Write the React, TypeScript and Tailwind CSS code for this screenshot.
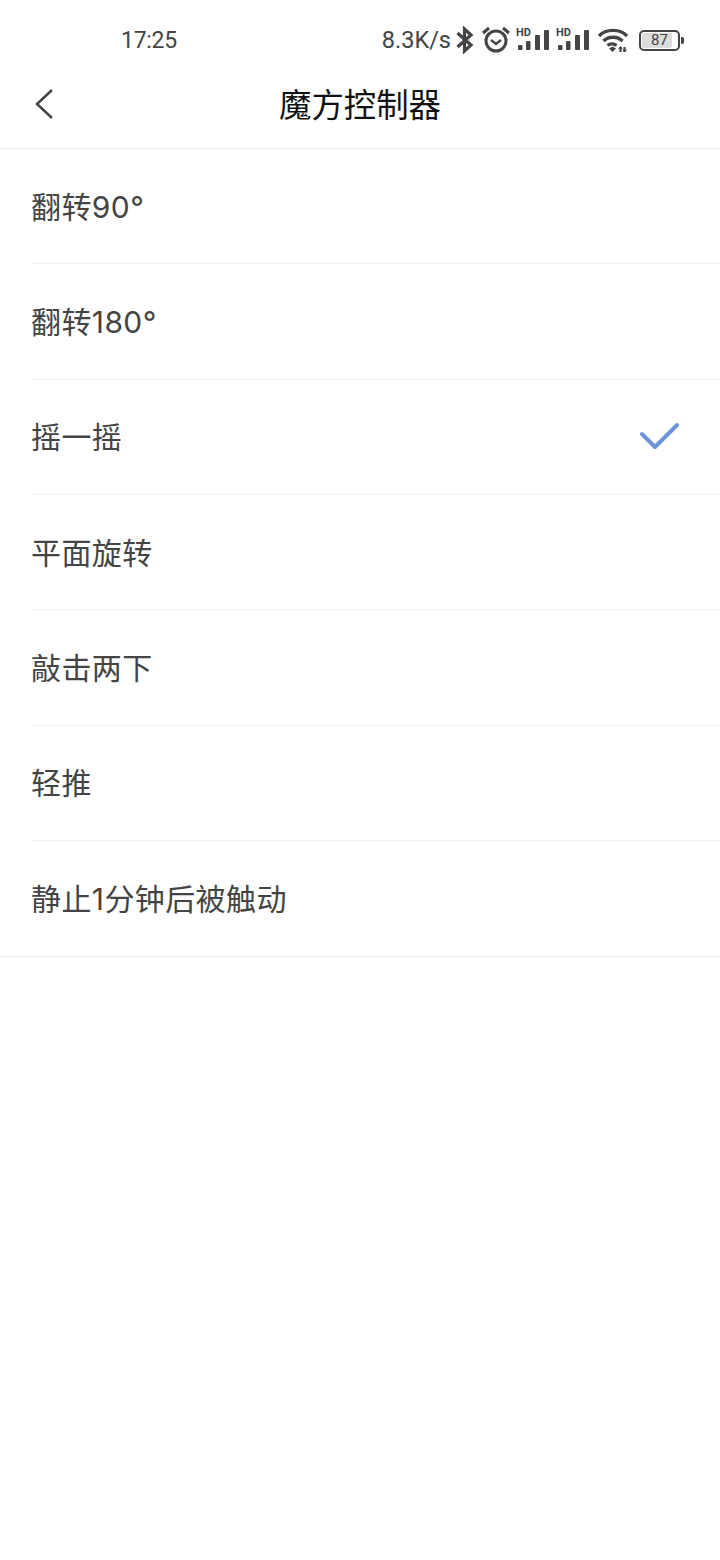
const SANS = "font-['Inter','Noto_Sans_CJK_SC',sans-serif]";

function Signal() {
  return (
    <div className="relative w-[33px] h-[24px]">
      <span className="absolute left-0 top-0 text-[11px] leading-[10px] font-bold text-[#444] font-['Roboto',sans-serif]">HD</span>
      <svg width="33" height="24" viewBox="0 0 33 24" className="absolute left-0 top-0" fill="#444">
        <rect x="2" y="17" width="4.5" height="5" rx="1" />
        <rect x="10" y="13" width="4.5" height="9" rx="1" />
        <rect x="19" y="7" width="5" height="15" rx="1" />
        <rect x="28" y="2" width="5" height="20" rx="1" />
      </svg>
    </div>
  );
}

const items = ["翻转90°", "翻转180°", "摇一摇", "平面旋转", "敲击两下", "轻推", "静止1分钟后被触动"];

export default function App() {
  return (
    <div className={`w-[720px] h-[1560px] bg-white flex flex-col ${SANS}`}>
      <div className="h-[80px] flex items-center shrink-0 text-[#444] font-['Roboto',sans-serif]">
        <span className="ml-[121px] mt-[2px] text-[23px] tracking-[-0.3px]">17:25</span>
        <div className="ml-auto mr-[36px] flex items-center">
          <span className="mt-[2px] text-[23.5px]">8.3K/s</span>
          <svg width="20" height="28" viewBox="0 0 20 28" fill="none" stroke="#444" strokeWidth="3.2" className="ml-[4px]">
            <path d="M2.5 7 L16 19 L9.5 25 V3 L16 9 L2.5 21" />
          </svg>
          <svg width="30" height="28" viewBox="0 0 30 28" fill="none" stroke="#444" className="ml-[6px]">
            <circle cx="15" cy="15" r="10" strokeWidth="3" />
            <path d="M10 14 L15 18 L20 14" strokeWidth="2.5" />
            <path d="M2 7 L8 2 M28 7 L22 2" strokeWidth="3" />
          </svg>
          <div className="ml-[5px]"><Signal /></div>
          <div className="ml-[7px]"><Signal /></div>
          <svg width="32" height="26" viewBox="0 0 32 26" fill="none" stroke="#444" strokeWidth="3.4" className="ml-[8px]">
            <path d="M2 9 C9 1.5 23 1.5 30 9" />
            <path d="M6.5 14 C11.5 9 20.5 9 25.5 14" />
            <path d="M10.5 18.5 C13 16.5 17 16.5 19.5 18.5" />
            <path d="M12 21.5 L15.5 19.5 L19 21.5 L15.5 25 Z" fill="#444" stroke="none" />
            <path d="M23.5 25 V20 M27.5 25 V20" strokeWidth="2.2" />
            <path d="M21.5 22 L23.5 19.5 L25 22 M26 22.5 L27.5 25 L29.5 22.5" strokeWidth="1" />
          </svg>
          <div className="ml-[10px] flex items-center">
            <div className="relative w-[41px] h-[21px] rounded-[5px] border-[2.5px] border-[#444] flex items-center justify-center">
              <div className="absolute left-[1px] top-[1px] bottom-[1px] w-[30px] rounded-[2px] bg-[#dcdcdc]" />
              <span className="relative text-[15px] leading-none">87</span>
            </div>
            <div className="w-[3px] h-[7px] ml-[1px] rounded-r-[2px] bg-[#444]" />
          </div>
        </div>
      </div>

      <div className="relative h-[69px] shrink-0 flex justify-center pt-[2px] border-b border-[#ececec]">
        <svg width="20" height="32" viewBox="0 0 20 32" fill="none" stroke="#444" strokeWidth="2.5" className="absolute left-[35px] top-[8px]">
          <path d="M17 2 L2 16 L17 30" />
        </svg>
        <span className="text-[32.4px] leading-[48px] text-[#111]">魔方控制器</span>
      </div>

      <div className="border-b border-[#ececec]">
        {items.map((t, i) => (
          <div
            key={t}
            className={`h-[115.33px] ml-[30px] flex items-center justify-between ${i < items.length - 1 ? "border-b border-[#f0f0f0]" : ""}`}
          >
            <span className="ml-[1px] pt-[2px] text-[30px] tracking-[0.4px] text-[#444]">{t}</span>
            {i === 2 && (
              <svg width="40" height="30" viewBox="0 0 40 30" fill="none" stroke="#6f93d8" strokeWidth="4" strokeLinecap="round" strokeLinejoin="round" className="mr-[40px]">
                <path d="M2 12 L15 25 L37 3" />
              </svg>
            )}
          </div>
        ))}
      </div>
    </div>
  );
}
